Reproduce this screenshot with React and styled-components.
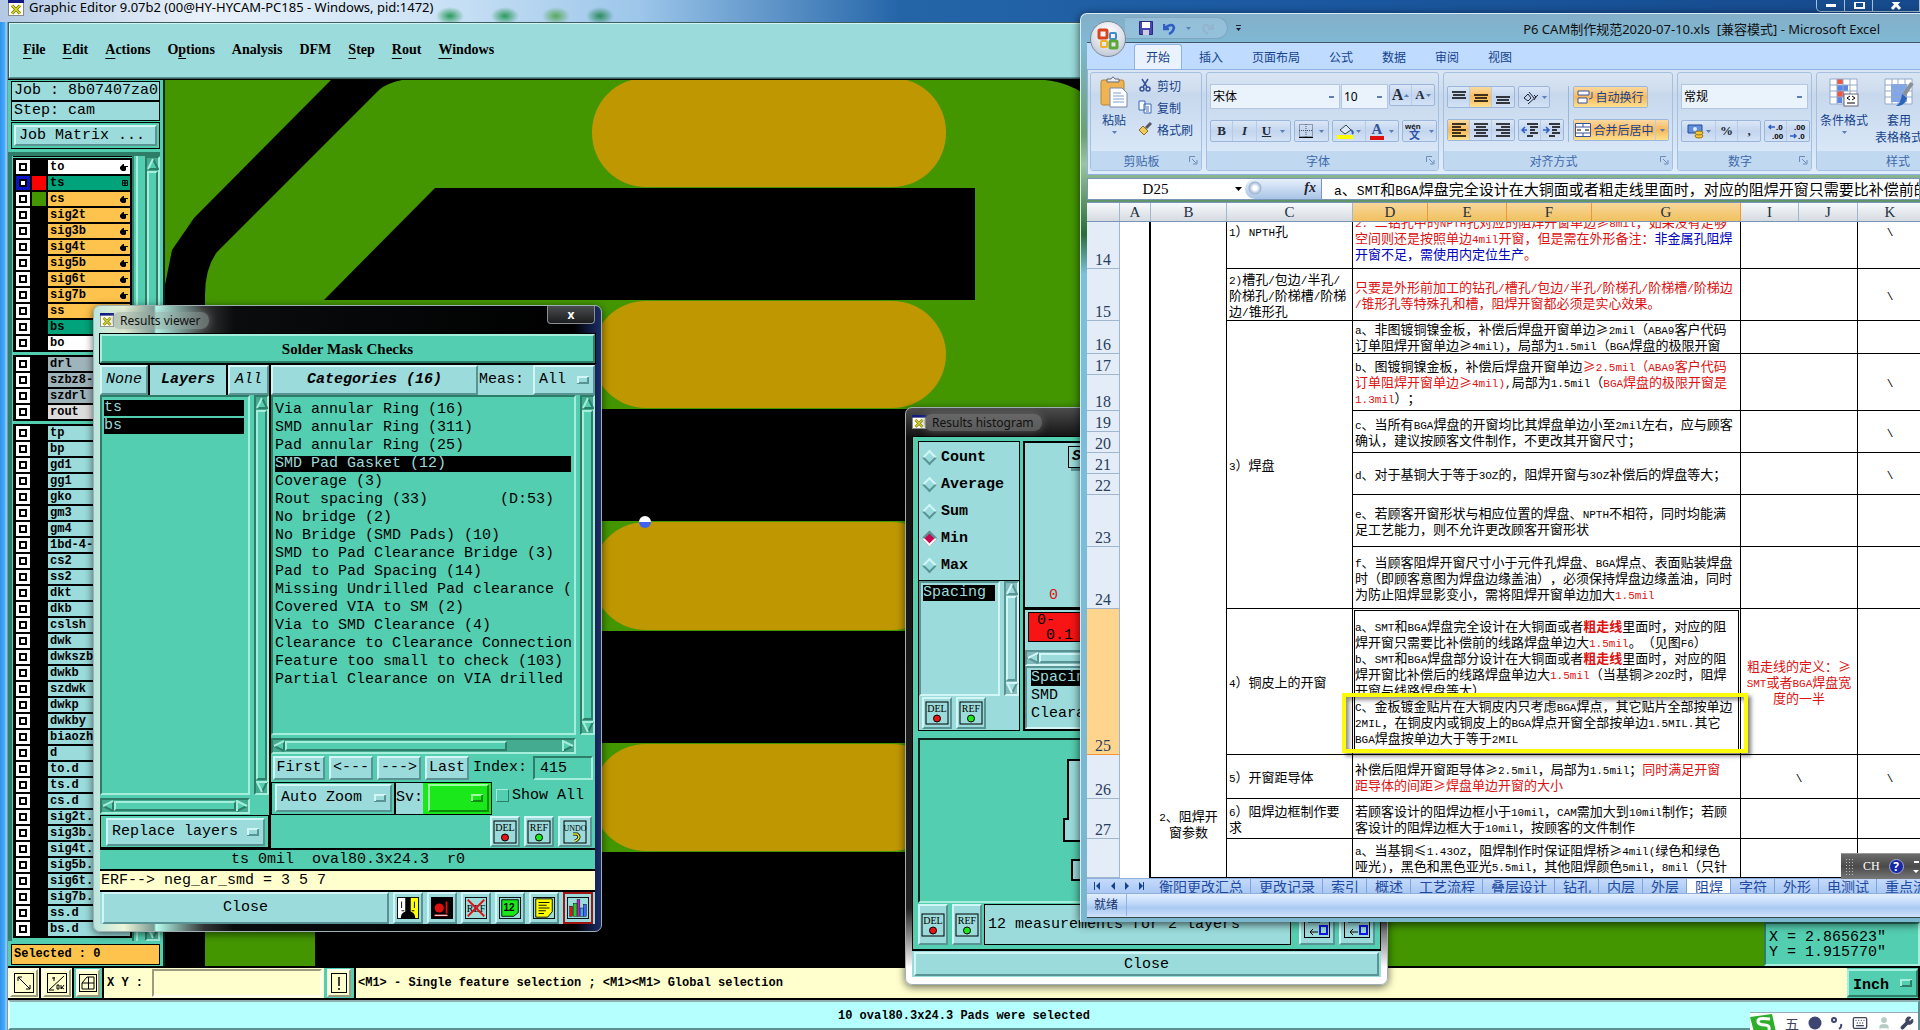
import React from 'react'
import styled, { createGlobalStyle, css } from 'styled-components'
import { Wrench, Keyboard, User } from 'lucide-react'

const AQUA = '#9bdbdb'
const MINT = '#54ceb0'
const CREAM = '#ffffce'

const mono = '"Liberation Mono", monospace'
const serif = '"Liberation Serif", serif'
const ui = '"Noto Sans", "Noto Sans CJK SC", sans-serif'
const han = '"Noto Sans CJK SC", sans-serif'

/* ---------- data ---------- */

const menus = ['_File', '_Edit', '_Actions', 'O_ptions', 'Analysis', 'DFM', '_Step', '_Rout', '_Windows']

const layerGroups = [
    [
        ['to', '#fff'], ['ts', '#00a37a', '#f00', 'grid'], ['cs', '#fdc34c', '#439600'],
        ['sig2t', '#fdc34c'], ['sig3b', '#fdc34c'], ['sig4t', '#fdc34c'], ['sig5b', '#fdc34c'],
        ['sig6t', '#fdc34c'], ['sig7b', '#fdc34c'], ['ss', '#fdc34c'], ['bs', '#00a37a'], ['bo', '#fff'],
    ],
    [['drl', '#9fb3bb'], ['szbz8-', '#9fb3bb'], ['szdrl', '#9fb3bb'], ['rout', '#dcdcdc']],
    [
        'tp', 'bp', 'gd1', 'gg1', 'gko', 'gm3', 'gm4', '1bd-4-', 'cs2', 'ss2', 'dkt', 'dkb', 'cslsh', 'dwk',
        'dwkszb', 'dwkb', 'szdwk', 'dwkp', 'dwkby', 'biaozh', 'd', 'to.d', 'ts.d', 'cs.d', 'sig2t.', 'sig3b.',
        'sig4t.', 'sig5b.', 'sig6t.', 'sig7b.', 'ss.d', 'bs.d',
    ].map(name => [name, AQUA]),
]

const categories = [
    'Via annular Ring (16)', 'SMD annular Ring (311)', 'Pad annular Ring (25)', 'SMD Pad Gasket (12)',
    'Coverage (3)', 'Rout spacing (33)        (D:53)', 'No bridge (2)', 'No Bridge (SMD Pads) (10)',
    'SMD to Pad Clearance Bridge (3)', 'Pad to Pad Spacing (14)', 'Missing Undrilled Pad clearance (',
    'Covered VIA to SM (2)', 'Via to SMD Clearance (4)', 'Clearance to Clearance Connection',
    'Feature too small to check (103)', 'Partial Clearance on VIA drilled',
]

const ribbonTabs = ['开始', '插入', '页面布局', '公式', '数据', '审阅', '视图']

const sheetTabs = [
    '衡阳更改汇总', '更改记录', '索引', '概述', '工艺流程', '叠层设计', '钻孔', '内层', '外层', '阻焊',
    '字符', '外形', '电测试', '重点流程',
]

// every line is a list of segments: plain string, or [colour, text, bold]
const R = '#d11'
const B = '#00b'
const sheetText = {
    r14: [
        [[R, '2. 二钻孔中的NPTH孔对应的阻焊开窗单边≥8mil，如果没有足够']],
        [[R, '空间则还是按照单边4mil开窗，但是需在外形备注：'], [B, '非金属孔阻焊']],
        [[B, '开窗不足，需使用内定位生产'], [R, '。']],
    ],
    r15: [
        [[R, '只要是外形前加工的钻孔/槽孔/包边/半孔/阶梯孔/阶梯槽/阶梯边']],
        [[R, '/锥形孔等特殊孔和槽，阻焊开窗都必须是实心效果。']],
    ],
    r16: [
        ['a、非图镀铜镍金板，补偿后焊盘开窗单边≥2mil（ABA9客户代码'],
        ['订单阻焊开窗单边≥4mil)，局部为1.5mil（BGA焊盘的极限开窗'],
    ],
    r17: [
        ['b、图镀铜镍金板，补偿后焊盘开窗单边', [R, '≥2.5mil（ABA9客户代码']],
        [[R, '订单阻焊开窗单边≥4mil)'], ',局部为1.5mil（', [R, 'BGA焊盘的极限开窗是']],
        [[R, '1.3mil'], '）；'],
    ],
    r19: [
        ['c、当所有BGA焊盘的开窗均比其焊盘单边小至2mil左右，应与顾客'],
        ['确认，建议按顾客文件制作，不更改其开窗尺寸；'],
    ],
    r21: [['d、对于基铜大于等于3OZ的，阻焊开窗与3OZ补偿后的焊盘等大；']],
    r23: [
        ['e、若顾客开窗形状与相应位置的焊盘、NPTH不相符，同时均能满'],
        ['足工艺能力，则不允许更改顾客开窗形状'],
    ],
    r24: [
        ['f、当顾客阻焊开窗尺寸小于元件孔焊盘、BGA焊点、表面贴装焊盘'],
        ['时（即顾客意图为焊盘边缘盖油），必须保持焊盘边缘盖油，同时'],
        ['为防止阻焊显影变小，需将阻焊开窗单边加大', [R, '1.5mil']],
    ],
    r25: [
        ['a、SMT和BGA焊盘完全设计在大铜面或者', [R, '粗走线', true], '里面时，对应的阻'],
        ['焊开窗只需要比补偿前的线路焊盘单边大', [R, '1.5mil'], '。（见图F6）'],
        ['b、SMT和BGA焊盘部分设计在大铜面或者', [R, '粗走线', true], '里面时，对应的阻'],
        ['焊开窗比补偿后的线路焊盘单边大', [R, '1.5mil'], '（当基铜≥2OZ时，阻焊'],
        ['开窗与线路焊盘等大）'],
        ['C、金板镀金贴片在大铜皮内只考虑BGA焊点，其它贴片全部按单边'],
        ['2MIL，在铜皮内或铜皮上的BGA焊点开窗全部按单边1.5MIL.其它'],
        ['BGA焊盘按单边大于等于2MIL'],
    ],
    r26: [
        ['补偿后阻焊开窗距导体≥2.5mil，局部为1.5mil；', [R, '同时满足开窗']],
        [[R, '距导体的间距≥焊盘单边开窗的大小']],
    ],
    r27: [
        ['若顾客设计的阻焊边框小于10mil，CAM需加大到10mil制作；若顾'],
        ['客设计的阻焊边框大于10mil，按顾客的文件制作'],
    ],
    r28: [
        ['a、当基铜≤1.43OZ，阻焊制作时保证阻焊桥≥4mil(绿色和绿色'],
        ['哑光)，黑色和黑色亚光5.5mil，其他阻焊颜色5mil，8mil（只针'],
    ],
    c15: [['2)槽孔/包边/半孔/'], ['阶梯孔/阶梯槽/阶梯'], ['边/锥形孔']],
    i25: [[[R, '粗走线的定义：≥']], [[R, 'SMT或者BGA焊盘宽']], [[R, '度的一半']]],
}

/* ---------- shared parts ---------- */

const Global = createGlobalStyle`
    *{
        box-sizing: border-box;
    }
    body{
        margin: 0;
        overflow: hidden;
        text-spacing-trim: space-all;
    }
    button, input, select{
        margin: 0;
        padding: 0;
        font: inherit;
        color: inherit;
        border-radius: 0;
    }
    svg{
        display: block;
        flex: none;
    }
`

const tones = {
    aqua: [AQUA, '#d2f6f6', '#5a9393'],
    mint: [MINT, '#a4eedb', '#2d7d68'],
    cream: [CREAM, '#fffff2', '#9c9c80'],
    lime: ['#1be81b', '#9dffa0', '#0e8c10'],
}

const raised = css`
    background-color: ${p => tones[p.$tone || 'aqua'][0]};
    border: 2px solid;
    border-color: ${p => {
        const [, hi, lo] = tones[p.$tone || 'aqua']
        return `${hi} ${lo} ${lo} ${hi}`
    }};
`

const sunken = css`
    background-color: ${p => tones[p.$tone || 'mint'][0]};
    border: 2px solid;
    border-color: ${p => {
        const [, hi, lo] = tones[p.$tone || 'mint']
        return `${lo} ${hi} ${hi} ${lo}`
    }};
`

const MotifButton = styled.button`
    ${raised}
    display: flex;
    align-items: center;
    justify-content: ${p => p.$start ? 'flex-start' : 'center'};
    flex: ${p => p.$grow ? 1 : 'none'};
    width: ${p => p.$w ? p.$w + 'px' : 'auto'};
    height: ${p => p.$h ? p.$h + 'px' : 'auto'};
    padding: ${p => p.$start ? '0 3px' : 0};
    font-family: ${mono};
    font-size: 15px;
    font-weight: ${p => p.$bold ? 700 : 400};
    font-style: ${p => p.$italic ? 'italic' : 'normal'};
    white-space: pre;
    border-color: ${p => p.$alert && '#a01414'};
`

const MotifSelect = styled.select`
    ${raised}
    appearance: none;
    width: ${p => p.$w ? p.$w + 'px' : 'auto'};
    flex: ${p => p.$w ? 'none' : 1};
    min-width: 0;
    height: ${p => p.$h || 28}px;
    padding: 0 4px;
    font-family: ${mono};
    font-size: 15px;
    font-weight: ${p => p.$bold ? 700 : 400};
    background-image: linear-gradient(${p => tones[p.$tone || 'aqua'][0]}, ${p => tones[p.$tone || 'aqua'][0]}),
        linear-gradient(150deg, ${p => tones[p.$tone || 'aqua'][1]} 50%, ${p => tones[p.$tone || 'aqua'][2]} 51%);
    background-repeat: no-repeat;
    background-size: 8px 4px, 12px 8px;
    background-position: right 6px center, right 4px center;
`

const ScrollTrack = styled.div`
    display: flex;
    flex: none;
    flex-direction: ${p => p.$row ? 'row' : 'column'};
    width: ${p => p.$row ? 'auto' : '15px'};
    height: ${p => p.$row ? '16px' : 'auto'};
    align-items: stretch;
    border: 2px solid;
    border-color: ${p => {
        const [, hi, lo] = tones[p.$tone || 'mint']
        return `${lo} ${hi} ${hi} ${lo}`
    }};
    background: ${p => p.$tone === 'aqua' ? '#83bcbc' : '#44ab91'};
`

const ScrollThumb = styled.div`
    ${raised}
    flex: ${p => p.$grow || 1};
    margin: 1px 0;
`

const Gap = styled.div`
    flex: ${p => p.$grow || 1};
`

const arrowPoints = {
    up: ['6,1 1,11', '1,11 11,11 6,1'],
    down: ['11,1 1,1 6,11', '6,11 11,1'],
    left: ['11,11 11,1', '11,1 1,6 11,11'],
    right: ['1,11 1,1 11,6', '11,6 1,11'],
}

const arrowFace = {
    up: '6,1 1,11 11,11',
    down: '1,1 11,1 6,11',
    left: '11,1 11,11 1,6',
    right: '1,1 1,11 11,6',
}

function Arrow({ dir, tone = 'mint' }) {
    const [face, hi, lo] = tones[tone]
    const [a, b] = arrowPoints[dir]
    return (
        <svg width="12" height="12" viewBox="0 0 12 12">
            <polygon points={arrowFace[dir]} fill={face} />
            <polyline points={b} fill="none" stroke={lo} strokeWidth="2" />
            <polyline points={a} fill="none" stroke={dir === 'left' ? lo : hi} strokeWidth="2" />
            {dir === 'left' && <polyline points="1,6 11,1" fill="none" stroke={hi} strokeWidth="2" />}
        </svg>
    )
}

function Scroll({ row, tone = 'mint', rest = 0 }) {
    return (
        <ScrollTrack $row={row} $tone={tone}>
            <Arrow dir={row ? 'left' : 'up'} tone={tone} />
            <ScrollThumb $tone={tone} $grow={8} />
            {rest > 0 && <Gap $grow={rest} />}
            <Arrow dir={row ? 'right' : 'down'} tone={tone} />
        </ScrollTrack>
    )
}

function XIcon({ size = 16 }) {
    return (
        <svg width={size} height={size} viewBox="0 0 16 16">
            <rect x="0.5" y="0.5" width="15" height="15" fill="#fffef0" stroke="#888" />
            <rect x="0" y="0" width="16" height="3" fill="#101a80" />
            <path d="M4 5.500l8 8M12 5.500l-8 8" stroke="#6f6f10" strokeWidth="3" />
            <path d="M4 5.500l8 8M12 5.500l-8 8" stroke="#d8d820" strokeWidth="1.600" />
        </svg>
    )
}

function TagIcon({ label, kind }) {
    return (
        <svg width="24" height="24" viewBox="0 0 24 24">
            <rect x="1" y="1" width="22" height="22" fill={AQUA} stroke="#000" />
            <text x="12" y="11" textAnchor="middle" fontFamily="Liberation Serif" fontSize={label.length > 3 ? 8 : 10}>{label}</text>
            {kind === 'undo'
                ? <path d="M10 14h4q4 3 0 6l-2 1" fill="none" stroke="#000" strokeWidth="3" />
                : <circle cx="12" cy="17.500" r="3.500" fill={kind === 'ref' ? '#1be81b' : '#e81414'} stroke="#000" />}
            {kind === 'undo' && <path d="M10 14h4q4 3 0 6l-2 1" fill="none" stroke="#f4ee30" strokeWidth="1.500" />}
        </svg>
    )
}

/* ---------- graphic editor ---------- */

const Desktop = styled.div`
    position: relative;
    height: 100vh;
    overflow: hidden;
    color: #000;
    background: #1e5fa8;
`

const Editor = styled.main`
    display: flex;
    flex-direction: column;
    height: 100%;
    padding-left: 8px;
    background: linear-gradient(90deg, #3391e8 0, #45b0ff 5px, #a6d9ff 6px, #5c87a8 8px, transparent 8px);
`

const EditorTitle = styled.div`
    display: flex;
    flex: none;
    align-items: flex-start;
    gap: 5px;
    height: 22px;
    margin-left: -8px;
    padding-left: 8px;
    font-family: ${ui};
    font-size: 13px;
    line-height: 15px;
    overflow: hidden;
    background:
        radial-gradient(ellipse 14px 9px at 450px 16px, #2c9a5c, transparent),
        radial-gradient(ellipse 14px 9px at 505px 16px, #2c9a5c, transparent),
        radial-gradient(ellipse 14px 9px at 556px 16px, #57a85c, transparent),
        radial-gradient(ellipse 14px 9px at 600px 16px, #2c8a5c, transparent),
        linear-gradient(90deg, #b3c9e4 0, #e8f1fa 200px, #cfe4f6 420px, #9cc6ea 640px, #2465a8 900px, #1b58a0 1300px, #164a8c 100%);
`

const Caption = styled.div`
    display: flex;
    margin: 0 0 0 auto;
    height: 12px;
    border: 1px solid #a9c3de;
    border-top: 0;
    border-radius: 0 0 0 5px;
    button{
        display: flex;
        align-items: center;
        justify-content: center;
        width: 28px;
        border: 0;
        border-right: 1px solid #a9c3de;
        background: none;
    }
    button:last-child{
        width: 46px;
        border: 0;
    }
`

const MenuBar = styled.nav`
    ${raised}
    display: flex;
    flex: none;
    align-items: center;
    gap: 17px;
    height: 57px;
    padding: 0 13px 2px;
    outline: 1px solid #3d5c5c;
    outline-offset: -1px;
    button{
        border: 0;
        background: none;
        font-family: ${serif};
        font-size: 14px;
        font-weight: 700;
    }
    u{
        text-underline-offset: 4px;
        text-decoration-thickness: 1px;
    }
`

const Work = styled.div`
    display: flex;
    flex: 1;
    min-height: 0;
    border-top: 1px solid #000;
`

const SidePanel = styled.aside`
    display: flex;
    flex: none;
    flex-direction: column;
    width: 157px;
    padding: 1px 3px;
    border-right: 2px solid #10241e;
    background: ${MINT};
    overflow: hidden;
`

const JobLine = styled.div`
    height: 20px;
    padding-left: 2px;
    border: 1px solid #000;
    background: ${AQUA};
    font: 15px/18px ${mono};
    white-space: pre;
`

const MatrixBox = styled.div`
    display: flex;
    margin: 1px 0 3px;
    padding: 2px;
    border: 1px solid #000;
    button{
        height: 21px;
    }
`

const LayerArea = styled.div`
    display: flex;
    flex: 1;
    min-height: 0;
    margin-left: -3px;
    padding-left: 1px;
    border-top: 4px solid #2d7d68;
    border-left: 4px solid #2d7d68;
`

const LayerList = styled.div`
    display: flex;
    flex-direction: column;
    gap: 3px;
    width: 120px;
    padding-top: 2px;
    border-top: 1px solid #000;
`

const LayerGroup = styled.div`
    flex: none;
    padding: 1px 2px 1px 3px;
    margin-top: ${p => p.$first ? '-1px' : 0};
    background: #000;
`

const LayerRow = styled.label`
    display: flex;
    align-items: center;
    gap: 2px;
    height: 16px;
    font: 700 12px/14px ${mono};
    input{
        appearance: none;
        width: 14px;
        height: 14px;
        border: 3px solid ${p => p.$active ? '#0a14c8' : '#fff'};
        background: #fff;
        box-shadow: inset 0 0 0 2px #000;
    }
`

const Swatch = styled.span`
    width: 14px;
    height: 14px;
    background: ${p => p.$color || '#000'};
`

const LayerName = styled.span`
    display: flex;
    flex: 1;
    align-items: center;
    justify-content: space-between;
    height: 14px;
    padding: 0 2px;
    background: ${p => p.$color};
`

const Ridge = styled.div`
    width: 13px;
    background: linear-gradient(90deg, #2d7d68 2px, ${MINT} 2px 4px, #a4eedb 4px 6px, ${MINT} 6px);
`

const SelectedBox = styled.div`
    height: 21px;
    margin: 3px 0 0;
    padding-left: 2px;
    border: 1px solid #000;
    background: #fdc34c;
    font: 700 12px/19px ${mono};
`

const Canvas = styled.div`
    position: relative;
    flex: 1;
    min-width: 0;
    background: #000;
    overflow: hidden;
`

const Coords = styled.div`
    position: absolute;
    right: 0;
    bottom: 0;
    width: 156px;
    height: 44px;
    padding: 6px 3px 0;
    border: 2px solid;
    border-color: #2d7d68 #a4eedb #a4eedb #2d7d68;
    background: ${MINT};
    font: 15px/15px ${mono};
    white-space: pre;
`

const ToolStrip = styled.div`
    display: flex;
    flex: none;
    align-items: stretch;
    height: 34px;
    border-top: 2px solid #000;
    border-bottom: 2px solid #000;
    background: ${CREAM};
    font: 700 12px/30px ${mono};
    label{
        width: 48px;
        padding-left: 3px;
        white-space: pre;
    }
    p{
        flex: 1;
        margin: 0;
        padding-left: 2px;
        white-space: pre;
        overflow: hidden;
    }
`

const XYInput = styled.input`
    ${sunken}
    width: 170px;
    margin: 1px 2px 1px 0;
    padding: 0 5px;
`

const StripCell = styled.div`
    display: flex;
    flex: none;
    align-items: center;
    justify-content: center;
    width: ${p => p.$w || 33}px;
    border-right: 2px solid #000;
    background: ${p => p.$mint ? MINT : CREAM};
`

const StatusBar = styled.footer`
    flex: none;
    height: 30px;
    border: 2px solid;
    border-color: #8fb0b0 #5d9090 #5d9090 #f0ffff;
    background: #b5ffff;
    font: 700 12px/28px ${mono};
    text-align: center;
`

function HandIcon() {
    return (
        <svg width="8" height="8" viewBox="0 0 8 8">
            <path d="M0 4l3-3h1v2h4v1H6v3L5 8H2L0 6z" />
        </svg>
    )
}

function GridIcon() {
    return (
        <svg width="6" height="6" viewBox="0 0 6 6">
            <path d="M0.500 0.500h5v5h-5zM3 0v6M0 3h6" fill="none" stroke="#000" />
        </svg>
    )
}

function Board() {
    return (
        <svg width="100%" height="100%">
            <rect width="100%" height="329" fill="#439600" />
            <path d="M166 0H237Q222 3 214 10L52 172Q40 188 40 215V885H0V205L7 170 29 138z" />
            <rect x="40" y="215" width="110" height="680" fill="#439600" />
            <polygon points="270,108 810,108 810,220 159,220" />
            <path d="M880 0h60v30Q910 2 880 0z" />
            <rect x="427" y="-2" width="354" height="109" rx="54" fill="#bf9700" />
            <rect x="427" y="221" width="354" height="107" rx="54" fill="#bf9700" />
            <rect x="150" y="441" width="660" height="110" fill="#439600" />
            <rect x="427" y="442" width="354" height="108" rx="54" fill="#bf9700" />
            <rect x="150" y="663" width="660" height="109" fill="#439600" />
            <rect x="427" y="664" width="354" height="107" rx="54" fill="#bf9700" />
            <rect x="1200" y="830" width="100%" height="100" fill="#439600" />
            <path d="M474 442a6 6 0 0 1 12 0z" fill="#fff" />
            <path d="M474 442a6 6 0 0 0 12 0z" fill="#3f63f0" />
        </svg>
    )
}

function MenuItem({ text }) {
    const at = text.indexOf('_')
    if (at < 0) return <button>{text}</button>
    return <button>{text.slice(0, at)}<u>{text[at + 1]}</u>{text.slice(at + 2)}</button>
}

function GraphicEditor() {
    return (
        <Editor>
            <EditorTitle>
                <XIcon />
                <span>Graphic Editor 9.07b2 (00@HY-HYCAM-PC185 - Windows, pid:1472)</span>
                <Caption>
                    <button aria-label="Minimize">
                        <svg width="12" height="8"><rect x="1" y="2" width="10" height="3" fill="#fff" /></svg>
                    </button>
                    <button aria-label="Restore">
                        <svg width="12" height="8"><path d="M2 0h9v6H2z" fill="none" stroke="#fff" strokeWidth="2" /></svg>
                    </button>
                    <button aria-label="Close">
                        <svg width="12" height="8"><path d="M2 -2l8 9M10 -2L2 7" stroke="#fff" strokeWidth="3" /></svg>
                    </button>
                </Caption>
            </EditorTitle>
            <MenuBar>
                {menus.map(text => <MenuItem key={text} text={text} />)}
            </MenuBar>
            <Work>
                <SidePanel>
                    <JobLine>Job : 8b07407za0</JobLine>
                    <JobLine>Step: cam</JobLine>
                    <MatrixBox><MotifButton $grow $start>Job Matrix ...</MotifButton></MatrixBox>
                    <LayerArea>
                        <LayerList>
                            {layerGroups.map((group, i) => (
                                <LayerGroup key={i} $first={i === 0}>
                                    {group.map(([name, color, swatch, icon]) => (
                                        <LayerRow key={name} $active={name === 'ts'}>
                                            <input type="checkbox" />
                                            <Swatch $color={swatch} />
                                            <LayerName $color={color}>
                                                {name}
                                                {i === 0 && (icon ? <GridIcon /> : <HandIcon />)}
                                            </LayerName>
                                        </LayerRow>
                                    ))}
                                </LayerGroup>
                            ))}
                        </LayerList>
                        <Ridge />
                        <Scroll />
                    </LayerArea>
                    <SelectedBox>Selected : 0</SelectedBox>
                </SidePanel>
                <Canvas>
                    <Board />
                    <Coords>{'X = 2.865623"\nY = 1.915770"'}</Coords>
                </Canvas>
            </Work>
            <ToolStrip>
                <StripCell>
                    <MotifButton $tone="cream" $w={28} $h={28} aria-label="Measure">
                        <svg width="20" height="20" viewBox="0 0 20 20" fill="none" stroke="#000">
                            <rect x="0.5" y="0.5" width="19" height="19" />
                            <path d="M4 4l12 12M4 8V4h4M12 16h4v-4" />
                        </svg>
                    </MotifButton>
                </StripCell>
                <StripCell>
                    <MotifButton $tone="cream" $w={28} $h={28} aria-label="Angle">
                        <svg width="20" height="20" viewBox="0 0 20 20" fill="none" stroke="#000">
                            <rect x="0.5" y="0.5" width="19" height="19" />
                            <path d="M2 17L17 3M2 17h5M5 5h3M7 4v4M10 12h2v4h-2zM14 12v4l3-4M14 14l3 2" />
                        </svg>
                    </MotifButton>
                </StripCell>
                <StripCell $w={30} $mint>
                    <MotifButton $tone="cream" $w={24} $h={28} aria-label="Grid">
                        <svg width="18" height="18" viewBox="0 0 18 18" fill="none" stroke="#000">
                            <rect x="0.5" y="0.5" width="17" height="17" />
                            <path d="M8 3h7v12H3V9zM9.500 3v12M3 9h12" />
                        </svg>
                    </MotifButton>
                </StripCell>
                <label htmlFor="xy">{'X Y :'}</label>
                <XYInput id="xy" type="text" $tone="cream" />
                <StripCell $w={32} $mint>
                    <MotifButton $tone="cream" $w={24} $h={28} aria-label="Warning">
                        <svg width="16" height="20" viewBox="0 0 16 20" fill="none" stroke="#000">
                            <rect x="0.5" y="0.5" width="15" height="19" />
                            <path d="M8 4v9M8 15v2" strokeWidth="1.500" />
                        </svg>
                    </MotifButton>
                </StripCell>
                <p>{'<M1> - Single feature selection ; <M1><M1> Global selection'}</p>
                <StripCell $w={73} $mint>
                    <MotifSelect $tone="mint" $bold aria-label="Units"><option>Inch</option></MotifSelect>
                </StripCell>
            </ToolStrip>
            <StatusBar>10 oval80.3x24.3 Pads were selected</StatusBar>
        </Editor>
    )
}

/* ---------- results viewer ---------- */

const ToolWindow = styled.section`
    position: absolute;
    left: ${p => p.$left}px;
    top: ${p => p.$top}px;
    width: ${p => p.$w}px;
    padding: 0 6px 7px;
    border: 1px solid #9fb0b4;
    border-radius: 7px;
    box-shadow: 0 2px 8px rgba(0, 0, 0, .6);
    background: ${p => p.$glass};
`

const ToolTitle = styled.header`
    display: flex;
    align-items: center;
    gap: 6px;
    height: 28px;
    font-family: ${ui};
    font-size: 12px;
    color: #111;
    span{
        padding: 0 8px;
        margin-left: -8px;
        border-radius: 8px;
        background: ${p => p.$glow};
        box-shadow: 0 0 8px ${p => p.$glow};
    }
    button{
        align-self: flex-start;
        width: 48px;
        height: 18px;
        margin-left: auto;
        border: 1px solid #8b8f92;
        border-top: 0;
        border-radius: 0 0 4px 4px;
        background: linear-gradient(#4a4d50, #1b1d1e);
        color: #fff;
        font: 700 12px/14px ${ui};
    }
`

const Stack = styled.div`
    display: flex;
    flex-direction: column;
    gap: 2px;
    background: #000;
    font: 15px/18px ${mono};
`

const Banner = styled.div`
    ${raised}
    height: 29px;
    outline: 1px solid #000;
    font: 700 15px/26px ${serif};
    text-align: center;
`

const Split = styled.div`
    display: grid;
    grid-template-columns: 169px 1fr;
    gap: 2px;
    height: 483px;
`

const Column = styled.div`
    display: flex;
    flex-direction: column;
    min-width: 0;
    background: ${MINT};
`

const HeadRow = styled.div`
    display: flex;
    align-items: stretch;
    flex: none;
    gap: ${p => p.$gap || 0}px;
    height: 30px;
    background: ${p => p.$dark ? '#000' : AQUA};
    label{
        flex: 1;
        align-self: center;
        padding-left: 1px;
    }
`

const HeadTitle = styled.div`
    flex: 1;
    background: ${AQUA};
    font-weight: 700;
    font-style: italic;
    line-height: 30px;
    text-align: center;
`

const Fill = styled.div`
    display: flex;
    flex: 1;
    min-height: 0;
    gap: 4px;
`

const ListBox = styled.ul`
    ${sunken}
    flex: 1;
    min-width: 0;
    margin: 0;
    padding: ${p => p.$pad || '2px 4px 0 2px'};
    list-style: none;
    overflow: hidden;
`

const ListItem = styled.li`
    height: 18px;
    line-height: 18px;
    overflow: hidden;
    white-space: pre;
    ${p => p.$on && css`
        background: linear-gradient(#000, #000) 0 1px / 100% 16px no-repeat;
        color: ${AQUA};
    `}
`

const ScrollSlot = styled.div`
    flex: none;
    padding: 3px 19px 1px 0;
`

const NavRow = styled.div`
    display: flex;
    flex: none;
    align-items: center;
    gap: 4px;
    height: 26px;
    padding: 0 2px;
    input{
        ${sunken}
        width: 60px;
        height: 24px;
        margin-left: auto;
        padding-left: 5px;
    }
`

const ZoomRow = styled.div`
    display: flex;
    flex: none;
    align-items: center;
    height: 34px;
`

const ZoomBox = styled.div`
    display: flex;
    flex: none;
    align-items: center;
    width: ${p => p.$w}px;
    height: 33px;
    padding: ${p => p.$pad || '0 2px 0 3px'};
    border: 1px solid #000;
    background: ${p => p.$bg || MINT};
`

const SvField = styled.span`
    display: flex;
    flex: 1;
    align-items: center;
    height: 31px;
    padding: 0 2px 0 5px;
    background: #1be81b;
`

const ShowAll = styled.label`
    display: flex;
    align-items: center;
    gap: 3px;
    margin: 0 0 5px 4px;
    input{
        appearance: none;
        width: 13px;
        height: 13px;
        border: 1px solid;
        border-color: #a4eedb #2d7d68 #2d7d68 #a4eedb;
    }
`

const IconRow = styled.div`
    display: flex;
    flex: none;
    justify-content: ${p => p.$start ? 'flex-start' : 'flex-end'};
    gap: 4px;
    padding: 1px 3px;
`

const Info = styled.div`
    height: 19px;
    padding-left: 1px;
    background: ${p => p.$bg};
    line-height: 20px;
    text-align: ${p => p.$center ? 'center' : 'left'};
    white-space: pre;
`

const BottomRow = styled.div`
    display: flex;
    gap: 4px;
    height: 32px;
    padding: 0 2px;
    background: ${AQUA};
`

const pictures = {
    faces: (
        <>
            <rect width="24" height="24" fill="#fff" /><rect x="12" width="12" height="24" fill="#ff0" />
            <path d="M9 0h6v16q5 1 5 8H4q0-7 5-8z" /><path d="M5 5v7M5 15h3M19 5v7M16 15h3" stroke="#000" />
        </>
    ),
    cam: (
        <>
            <rect width="24" height="24" fill="#000" /><circle cx="9" cy="12" r="5" fill="#e01010" />
            <path d="M17 5v13M4 20h14" stroke="#e01010" strokeWidth="2" /><path d="M4 20h14" stroke="#fff" />
        </>
    ),
    noref: (
        <>
            <text x="12" y="16" textAnchor="middle" fontFamily="Liberation Serif" fontSize="11">REF</text>
            <path d="M3 3l18 18M21 3L3 21" stroke="#e01010" strokeWidth="2" />
        </>
    ),
    page: (
        <>
            <path d="M3 3h18v14l-5 4H3z" fill="#1be81b" stroke="#000" />
            <text x="11" y="15" textAnchor="middle" fontFamily="Liberation Sans" fontWeight="700" fontSize="11">12</text>
        </>
    ),
    note: (
        <>
            <path d="M3 2h18v14l-5 6H3z" fill="#ff0" stroke="#000" />
            <path d="M6 6h12M6 9h9M6 12h12M6 15h8M6 18h6" stroke="#000" />
        </>
    ),
    bars: (
        <>
            <rect x="3" y="10" width="3" height="11" fill="#e01010" stroke="#000" strokeWidth="0.500" />
            <rect x="7" y="7" width="4" height="14" fill="#2c2" stroke="#000" strokeWidth="0.500" />
            <rect x="11" y="3" width="3" height="18" fill="#c020d0" stroke="#000" strokeWidth="0.500" />
            <rect x="15" y="12" width="3" height="9" fill="#3af" stroke="#000" strokeWidth="0.500" />
            <rect x="18" y="8" width="3" height="13" fill="#46f" stroke="#000" strokeWidth="0.500" />
        </>
    ),
}

function ResultsViewer() {
    return (
        <ToolWindow $left={93} $top={305} $w={509} $glass="linear-gradient(90deg, #b9e4dd 0, #eef6d8 30px, #7a9a92 60px, #b8fff0 62px, #333 110px, #0a0c0d 140px, #000 480px, #1a2c66 506px)">
            <ToolTitle $glow="rgba(150, 165, 160, .55)">
                <XIcon size={14} />
                <span>Results viewer</span>
                <button aria-label="Close window">x</button>
            </ToolTitle>
            <Stack>
                <Banner $tone="mint">Solder Mask Checks</Banner>
                <Split>
                    <Column>
                        <HeadRow $dark $gap={2}>
                            <MotifButton $w={48} $italic>None</MotifButton>
                            <HeadTitle>Layers</HeadTitle>
                            <MotifButton $w={41} $italic>All</MotifButton>
                        </HeadRow>
                        <Fill>
                            <ListBox>
                                <ListItem $on>ts</ListItem>
                                <ListItem $on>bs</ListItem>
                            </ListBox>
                            <Scroll />
                        </Fill>
                        <ScrollSlot><Scroll row /></ScrollSlot>
                        <ZoomBox $w={169} $pad="0 3px 0 5px">
                            <MotifSelect aria-label="Layer mode"><option>Replace layers</option></MotifSelect>
                        </ZoomBox>
                    </Column>
                    <Column>
                        <HeadRow>
                            <MotifButton $w={207} $bold $italic>Categories (16)</MotifButton>
                            <label htmlFor="meas">Meas:</label>
                            <MotifSelect id="meas" $w={62} $h={30}><option>All</option></MotifSelect>
                        </HeadRow>
                        <Fill>
                            <ListBox $pad="4px 3px 0 2px">
                                {categories.map((text, i) => <ListItem key={text} $on={i === 3}>{text}</ListItem>)}
                            </ListBox>
                            <Scroll />
                        </Fill>
                        <ScrollSlot><Scroll row rest={2} /></ScrollSlot>
                        <NavRow>
                            <MotifButton $w={52} $h={24}>First</MotifButton>
                            <MotifButton $w={44} $h={24}>{'<---'}</MotifButton>
                            <MotifButton $w={44} $h={24}>{'--->'}</MotifButton>
                            <MotifButton $w={44} $h={24}>Last</MotifButton>
                            <label htmlFor="index">Index:</label>
                            <input id="index" type="text" defaultValue="415" />
                        </NavRow>
                        <ZoomRow>
                            <ZoomBox $w={124}>
                                <MotifSelect aria-label="Zoom mode"><option>Auto Zoom</option></MotifSelect>
                            </ZoomBox>
                            <ZoomBox $w={97} $pad="0" $bg={AQUA}>
                                <label htmlFor="sv">Sv:</label>
                                <SvField>
                                    <MotifSelect id="sv" $tone="lime"><option> </option></MotifSelect>
                                </SvField>
                            </ZoomBox>
                            <ShowAll><input type="checkbox" />Show All</ShowAll>
                        </ZoomRow>
                        <IconRow>
                            <MotifButton $w={30} $h={31} aria-label="Delete"><TagIcon label="DEL" kind="del" /></MotifButton>
                            <MotifButton $w={30} $h={31} aria-label="Reference"><TagIcon label="REF" kind="ref" /></MotifButton>
                            <MotifButton $w={34} $h={31} aria-label="Undo"><TagIcon label="UNDO" kind="undo" /></MotifButton>
                        </IconRow>
                    </Column>
                </Split>
                <Info $bg={MINT} $center>{'ts 0mil  oval80.3x24.3  r0'}</Info>
                <Info $bg={CREAM}>{'ERF--> neg_ar_smd = 3 5 7'}</Info>
                <BottomRow>
                    <MotifButton $grow>Close</MotifButton>
                    {Object.keys(pictures).map(name => (
                        <MotifButton key={name} $w={30} $alert={name === 'bars'} aria-label={name}>
                            <svg width="22" height="22" viewBox="0 0 24 24">
                                {pictures[name]}
                                <rect x="0.5" y="0.5" width="23" height="23" fill="none" stroke="#000" />
                            </svg>
                        </MotifButton>
                    ))}
                </BottomRow>
            </Stack>
        </ToolWindow>
    )
}

/* ---------- results histogram ---------- */

const HistoBody = styled.div`
    padding: 4px 5px 1px;
    border: 1px solid #000;
    background: ${MINT};
    font: 15px/18px ${mono};
`

const HistoTop = styled.div`
    display: grid;
    grid-template-columns: 102px 1fr;
    gap: 3px;
    height: 290px;
`

const HistoSide = styled.div`
    display: flex;
    flex-direction: column;
    border: 1px solid #000;
    background: ${AQUA};
`

const RadioList = styled.fieldset`
    margin: 0;
    padding: 2px 3px;
    height: 139px;
    border: 0;
    border-bottom: 1px solid #000;
    label{
        display: flex;
        align-items: center;
        gap: 6px;
        height: 27px;
        font-weight: 700;
    }
    input{
        appearance: none;
        width: 11px;
        height: 11px;
        margin: 0 0 0 2px;
        border: 2px solid;
        border-color: #d2f6f6 #5a9393 #5a9393 #d2f6f6;
        transform: rotate(45deg);
    }
    input:checked{
        border-color: #5a9393 #fff #fff #5a9393;
        background: #c8064f;
    }
`

const HistoPlot = styled.div`
    display: flex;
    flex-direction: column;
    border: 2px solid #000;
    background: ${AQUA};
    min-width: 0;
`

const PlotArea = styled.div`
    display: flex;
    flex: none;
    flex-direction: column;
    align-items: flex-start;
    justify-content: space-between;
    height: 167px;
    padding: 3px 0 2px 24px;
    border-bottom: 3px solid #000;
    color: #d11;
    h4{
        margin: 0 0 0 19px;
        padding: 0 3px;
        border: 1px solid #000;
        box-shadow: 3px 3px 0 #5a9393;
        background: ${AQUA};
        color: #000;
        font: italic 700 15px/20px ${mono};
    }
`

const BinLabel = styled.div`
    flex: none;
    width: 88px;
    height: 30px;
    margin: 2px 0 8px 3px;
    padding-left: 8px;
    border: 1px solid #000;
    background: #f81414;
    line-height: 15px;
    white-space: pre;
`

const ShapePanel = styled.div`
    height: 165px;
    margin: 7px 0 1px;
    border: 2px solid;
    border-color: #10241e #a4eedb #a4eedb #10241e;
`

const MeasureRow = styled.div`
    display: flex;
    align-items: stretch;
    gap: 4px;
    height: 41px;
    margin-bottom: 3px;
    p{
        flex: 1;
        margin: 0 4px 0 -2px;
        padding-left: 3px;
        border: 1px solid #000;
        background: ${AQUA};
        line-height: 39px;
    }
`

const CloseRow = styled.div`
    display: flex;
    height: 27px;
    padding: 1px 2px;
    border-top: 1px solid #000;
    background: ${AQUA};
`

function CopyIcon() {
    return (
        <svg width="26" height="26" viewBox="0 0 26 26" fill="none">
            <rect x="0.5" y="0.5" width="25" height="25" stroke="#000" />
            <path d="M4 10h12M6 20h8M6 20l3-3M6 20l3 3" stroke="#000" />
            <rect x="16" y="14" width="7" height="8" stroke="#1414e0" strokeWidth="2" />
        </svg>
    )
}

function ResultsHistogram() {
    return (
        <ToolWindow $left={905} $top={407} $w={483} $glass="linear-gradient(#4c4c4c 0, #111 30px, #222 500px, #fff 560px)">
            <ToolTitle $glow="rgba(130, 130, 130, .6)">
                <XIcon size={14} />
                <span>Results histogram</span>
            </ToolTitle>
            <HistoBody>
                <HistoTop>
                    <HistoSide>
                        <RadioList>
                            {['Count', 'Average', 'Sum', 'Min', 'Max'].map(name => (
                                <label key={name}>
                                    <input type="radio" name="stat" defaultChecked={name === 'Min'} />{name}
                                </label>
                            ))}
                        </RadioList>
                        <Fill>
                            <ListBox $tone="aqua" $pad="1px 3px 0 2px"><ListItem $on>Spacing</ListItem></ListBox>
                            <Scroll tone="aqua" />
                        </Fill>
                        <IconRow $start>
                            <MotifButton $w={30} $h={32} aria-label="Delete"><TagIcon label="DEL" kind="del" /></MotifButton>
                            <MotifButton $w={30} $h={32} aria-label="Reference"><TagIcon label="REF" kind="ref" /></MotifButton>
                        </IconRow>
                    </HistoSide>
                    <HistoPlot>
                        <PlotArea><h4>Spacing</h4><span>0</span></PlotArea>
                        <BinLabel>{'0-\n 0.1'}</BinLabel>
                        <Scroll row tone="aqua" />
                        <ListBox $tone="aqua" $pad="1px 4px">
                            <ListItem $on>Spacing</ListItem>
                            <ListItem>SMD</ListItem>
                            <ListItem>Clearance</ListItem>
                        </ListBox>
                    </HistoPlot>
                </HistoTop>
                <ShapePanel>
                    <svg width="100%" height="100%">
                        <path d="M280 20H148v59h-4v22h136zM280 120H152v20h128z" fill={AQUA} stroke="#000" strokeWidth="2" />
                    </svg>
                </ShapePanel>
                <MeasureRow>
                    <MotifButton $w={30} aria-label="Delete"><TagIcon label="DEL" kind="del" /></MotifButton>
                    <MotifButton $w={30} aria-label="Reference"><TagIcon label="REF" kind="ref" /></MotifButton>
                    <p>12 measurements for 2 layers</p>
                    <MotifButton $w={36} aria-label="Copy"><CopyIcon /></MotifButton>
                    <MotifButton $w={36} aria-label="Move"><CopyIcon /></MotifButton>
                </MeasureRow>
            </HistoBody>
            <CloseRow><MotifButton $grow>Close</MotifButton></CloseRow>
        </ToolWindow>
    )
}

/* ---------- spreadsheet ---------- */

const Excel = styled.section`
    position: absolute;
    left: 1080px;
    right: 0;
    top: 13px;
    padding: 0 0 4px 6px;
    border-top: 1px solid #d7ecf8;
    border-left: 1px solid #d7ecf8;
    border-radius: 7px 0 0 0;
    box-shadow: 0 2px 10px rgba(0, 0, 0, .7);
    background: linear-gradient(#84aec8 0, #7fb9d4 28px, #6da06c 120px, #9cc4a0 150px, #2b6b38 220px, #7cc0dc 260px, #7ab6ce 100%);
    overflow: hidden;
    color: #15428b;
    font-family: ${ui};
    font-size: 12px;
`

const OfficeButton = styled.button`
    position: absolute;
    left: 9px;
    top: 7px;
    width: 36px;
    height: 36px;
    border: 1px solid #7a8796;
    border-radius: 50%;
    background: radial-gradient(circle at 50% 30%, #fff 0, #e3e6ee 45%, #b3bccb 100%);
    display: flex;
    align-items: center;
    justify-content: center;
`

const ExcelTitle = styled.header`
    display: flex;
    align-items: center;
    gap: 8px;
    height: 28px;
    padding-left: 38px;
    color: #111;
    h1{
        margin: 0 40px 0 auto;
        font-size: 13px;
        font-weight: 400;
        white-space: pre;
    }
`

const Quick = styled.div`
    display: flex;
    align-items: center;
    gap: 10px;
    width: 103px;
    height: 22px;
    padding-left: 14px;
    border: 1px solid #7fa5bf;
    border-left: 0;
    border-radius: 0 11px 11px 0;
    background: rgba(160, 200, 225, .6);
`

const TabBar = styled.nav`
    display: flex;
    gap: 3px;
    height: 27px;
    padding: 1px 0 0 47px;
    border-top: 1px solid #456;
    background: #bfdbff;
`

const RibbonTab = styled.button`
    padding: 0 11px 1px;
    margin-right: 2px;
    border: 1px solid ${p => p.$on ? '#8db2e3' : 'transparent'};
    border-bottom: 0;
    border-radius: 3px 3px 0 0;
    background: ${p => p.$on ? '#eaf3fd' : 'none'};
    font-family: ${han};
`

const Ribbon = styled.div`
    display: flex;
    gap: 4px;
    height: 106px;
    padding: 2px 0 3px 2px;
    border: 1px solid #8db2e3;
    border-right: 0;
    background: linear-gradient(#dbe6f4 0, #cfddee 20px, #c7d8ed 24px, #e0edfb 100%);
`

const GroupBox = styled.div`
    display: flex;
    flex: none;
    flex-direction: column;
    width: ${p => p.$w}px;
    border: 1px solid #a5bfe0;
    border-radius: 3px;
    font-family: ${han};
    overflow: hidden;
    h2{
        display: flex;
        flex: none;
        align-items: center;
        height: 19px;
        margin: 0;
        padding: 0 3px;
        background: #c1d8f1;
        color: #3e6aaa;
        font-size: 12px;
        font-weight: 400;
        line-height: 19px;
    }
    h2 span{
        flex: 1;
        text-align: center;
    }
`

const GroupBody = styled.div`
    display: flex;
    flex: 1;
    min-height: 0;
    flex-direction: ${p => p.$row ? 'row' : 'column'};
    gap: ${p => p.$gap || 11}px;
    padding: ${p => p.$pad || '11px 3px 0'};
`

const ToolLine = styled.div`
    display: flex;
    align-items: flex-start;
    gap: ${p => p.$gap || 3}px;
`

const Cluster = styled.div`
    display: flex;
    height: 22px;
    margin-left: ${p => p.$push ? 'auto' : 0};
    border: 1px solid #9ab6db;
    border-radius: 2px;
    background: linear-gradient(#dbe7f6, #c3d5ee 50%, #d3e2f5);
`

const Tool = styled.button`
    && {
        display: flex;
        align-items: center;
        justify-content: center;
        gap: ${p => p.$gap || 2}px;
        width: ${p => p.$w || 22}px;
        height: 20px;
        border: 0;
        border-right: ${p => p.$last ? 0 : '1px solid #b5cbe8'};
        background: ${p => p.$on ? 'linear-gradient(#fbd9a0, #f9b85c 50%, #fde08c)' : 'none'};
        color: ${p => p.$plain ? '#15428b' : '#222a38'};
        font: ${p => p.$italic ? 'italic' : 'normal'} ${p => p.$plain ? 400 : 700} ${p => p.$size || 13}px/18px ${p => p.$plain ? han : serif};
    }
`

const FontColor = styled.span`
    padding: 0 2px;
    border-bottom: 4px solid #e01010;
    color: #35539a;
    line-height: 13px;
`

const Combo = styled.select`
    appearance: none;
    width: ${p => p.$w}px;
    height: 25px;
    padding: 0 2px;
    border: 1px solid #b3c7e1;
    background: #eaf2fb linear-gradient(#5a7fb5, #5a7fb5) right 5px center / 5px 2px no-repeat;
    color: #000;
    font: 12px ${ui};
`

const FormulaBar = styled.div`
    display: flex;
    align-items: stretch;
    height: 22px;
    margin: 3px 0 2px;
    border: 1px solid #7996b8;
    background: #fff;
    color: #000;
`

const NameBox = styled.div`
    display: flex;
    flex: none;
    align-items: center;
    width: 157px;
    padding-right: 3px;
    span{
        flex: 1;
        padding-right: 12px;
        text-align: center;
        font: 15px ${serif};
    }
`

const FxBox = styled.div`
    flex: none;
    width: 77px;
    padding-right: 5px;
    border-right: 1px solid #7996b8;
    border-radius: 10px 0 0 10px;
    background: radial-gradient(circle at 10px 9px, #fff 2px, #9db4d3 6px, transparent 7px), linear-gradient(#e7f0fb, #a9c4e6);
    color: #223;
    font: italic 700 14px/18px ${serif};
    text-align: right;
`

const FormulaText = styled.div`
    flex: 1;
    padding-left: 12px;
    overflow: hidden;
    font: 15px/20px ${han};
    white-space: nowrap;
    i{
        font: 13px/20px ${mono};
    }
`

const ColHeads = styled.div`
    display: flex;
    height: 20px;
    border-top: 1px solid #7996b8;
    border-bottom: 1px solid #7996b8;
    overflow: hidden;
`

const ColHead = styled.div`
    flex: none;
    width: ${p => p.$w}px;
    border-right: 1px solid ${p => p.$on ? '#f29536' : '#9eb6ce'};
    background: ${p => p.$on ? 'linear-gradient(#f8d79b, #f1c15f)' : 'linear-gradient(#f6fafb, #d5dae2)'};
    color: #1f2f3f;
    font: 15px/18px ${serif};
    text-align: center;
`

const SheetView = styled.div`
    position: relative;
    background: #fff;
    overflow: hidden;
`

// the sheet is scrolled a little way into row 14
const Sheet = styled.table`
    width: 836px;
    margin-top: -29px;
    table-layout: fixed;
    border-collapse: separate;
    border-spacing: 0;
    color: #000;
    font: 13px/16px ${han};
    white-space: nowrap;
    i{
        font: 11px/1 ${mono};
    }
`

const RowHead = styled.th`
    height: ${p => p.$h}px;
    padding: 0;
    border-right: 1px solid #9eb6ce;
    border-bottom: 1px solid ${p => p.$on ? '#f29536' : '#9eb6ce'};
    background: ${p => p.$on ? '#ffd58d' : '#e4ecf7'};
    color: #27405e;
    vertical-align: bottom;
    font: 16px/16px ${serif};
`

const Cell = styled.td`
    padding: ${p => p.$pad || '0 2px'};
    border-right: 1px solid #000;
    border-bottom: 1px solid #000;
    vertical-align: ${p => p.$v || 'middle'};
    text-align: ${p => p.$center ? 'center' : 'left'};
    overflow: hidden;
    ${p => p.$blank && css`
        border-right: 2px solid #000;
        border-bottom: 0;
    `}
    ${p => p.$current && css`
        box-shadow: inset 0 0 0 1px #fff, inset 0 0 0 2px #000;
    `}
`

const Highlight = styled.div`
    position: absolute;
    left: 255px;
    top: 471px;
    width: 406px;
    height: 60px;
    border: 4px solid #fdfb0c;
    box-shadow: 3px 3px 4px rgba(0, 0, 0, .5), inset 3px 3px 4px rgba(0, 0, 0, .45);
`

const Seg = styled.span`
    color: ${p => p.$color};
    font-weight: ${p => p.$bold ? 700 : 400};
`

const SheetTabs = styled.nav`
    display: flex;
    align-items: center;
    height: 16px;
    border-top: 1px solid #8fb0dc;
    border-bottom: 1px solid #8fb0dc;
    background: linear-gradient(#c4dafa, #a9c8f3);
    overflow: hidden;
    svg{
        margin: 0 6px;
    }
`

const SheetTab = styled.button`
    flex: none;
    height: 16px;
    padding: 0 7px 0 8px;
    border: 0;
    border-right: 1px solid #7fa3d4;
    background: ${p => p.$on ? '#fff' : 'none'};
    color: #1e4ba0;
    font: 14px/15px ${han};
`

const ExcelStatus = styled.footer`
    height: 24px;
    border-bottom: 1px solid #344;
    background: linear-gradient(#e3effe, #c1d9f9 40%, #a9c9f2 60%, #d0e2fa);
    color: #15326b;
    line-height: 22px;
    span{
        display: inline-block;
        padding: 0 8px 0 7px;
        border-right: 1px solid #8db2e3;
    }
`

// latin runs sit half as wide as the ideographs around them
function Mixed({ text }) {
    return text.split(/([\x20-\x7e]+)/).map((part, i) => i % 2 ? <i key={i}>{part}</i> : part)
}

function Rich({ lines }) {
    return lines.map((line, i) => (
        <div key={i}>
            {line.map((seg, j) => typeof seg === 'string'
                ? <Mixed key={j} text={seg} />
                : <Seg key={j} $color={seg[0]} $bold={seg[2]}><Mixed text={seg[1]} /></Seg>)}
        </div>
    ))
}

function Tri({ color = '#5a7fb5', up }) {
    return <svg width="5" height="3" viewBox="0 0 5 3"><path d={up ? 'M0 3h5L2.500 0z' : 'M0 0h5L2.500 3z'} fill={color} /></svg>
}

function Launcher() {
    return (
        <svg width="9" height="9" viewBox="0 0 9 9" fill="none" stroke="#6c8cb8">
            <path d="M0.500 6V0.500H6M3 3l4 4M8 4v4H4" />
        </svg>
    )
}

function Group({ title, w, children, plain }) {
    return (
        <GroupBox $w={w}>
            {children}
            <h2><span>{title}</span>{!plain && <Launcher />}</h2>
        </GroupBox>
    )
}

function Lines({ rows, top = 2 }) {
    return (
        <svg width="16" height="16" viewBox="0 0 16 16" stroke="#000" strokeWidth="1.500">
            {rows.map(([x, w], i) => <path key={i} d={`M${x} ${top + i * 3}h${w}`} />)}
        </svg>
    )
}

function IndentIcon({ flip }) {
    return (
        <svg width="18" height="16" viewBox="0 0 18 16" fill="none" stroke="#000" strokeWidth="1.500">
            <path d="M6 2h11M9 5h8M9 8h5M9 11h8M6 14h6" />
            <path d={flip ? 'M0 8h5M3 5l3 3-3 3' : 'M6 8H1M4 5L1 8l3 3'} stroke="#2f5fc4" />
        </svg>
    )
}

// decimals gained or lost: an arrow beside one row of digits
function DecimalIcon({ less }) {
    return (
        <svg width="18" height="18" viewBox="0 0 18 18" fontFamily="Liberation Sans" fontWeight="700" fontSize="8">
            <text x={less ? 5 : 9} y="8">{less ? '.00' : '.0'}</text>
            <text x={less ? 9 : 5} y="17">{less ? '.0' : '.00'}</text>
            <path d={less ? 'M1 14h6M5 12l2 2-2 2' : 'M8 5H2M4 3L2 5l2 2'} fill="none" stroke="#2f5fc4" strokeWidth="1.500" />
        </svg>
    )
}

const full = [1, 14]
const leftRows = [full, [1, 9], full, [1, 9], full]
const midRows = [full, [3, 10], full, [3, 10], full]
const rightRows = [full, [6, 9], full, [6, 9], full]

const Clip = styled.div`
    display: flex;
    flex-direction: column;
    gap: ${p => p.$gap || 0}px;
    button{
        display: flex;
        align-items: center;
        gap: 5px;
        height: 18px;
        border: 0;
        background: none;
        color: #15428b;
        white-space: nowrap;
    }
`

const BigButton = styled.button`
    display: flex;
    flex: none;
    flex-direction: column;
    align-items: center;
    gap: 3px;
    width: ${p => p.$w}px;
    height: 76px;
    border: 0;
    background: none;
    color: #15428b;
    line-height: 17px;
    white-space: nowrap;
`

const Divider = styled.span`
    width: 1px;
    height: 56px;
    margin: 0 1px;
    background: #9ab6db;
`

function CondIcon({ brush }) {
    return (
        <svg width="30" height="30" viewBox="0 0 30 30">
            <rect x="1" y="1" width="27" height="25" fill="#fff" />
            {brush
                ? <rect x="7" y="6" width="16" height="18" fill="#7ea6ee" />
                : <><rect x="8" y="1" width="6" height="5" fill="#f25540" /><rect x="8" y="7" width="11" height="6" fill="#5b86e5" /><rect x="8" y="13" width="7" height="6" fill="#f25540" /><rect x="8" y="19" width="5" height="6" fill="#5b86e5" /></>}
            <path d="M1 1h27v25H1zM8 1v25M14 1v25M21 1v25M1 7h27M1 13h27M1 19h27" fill="none" stroke="#93a8c8" />
            {brush
                ? <><path d="M28 5L20 17" stroke="#8a8f98" strokeWidth="4" /><path d="M18 16l5 4q-3 9-11 8 5-3 6-12z" fill="#2d63b8" /></>
                : <><rect x="15" y="16" width="14" height="12" fill="#fff" stroke="#667" /><path d="M21 18l-3 2 3 2M23 22l3-2-3-2M18 25h8" fill="none" stroke="#000" /></>}
        </svg>
    )
}

function RibbonGroups() {
    return (
        <Ribbon>
            <Group title="剪贴板" w={112}>
                <GroupBody $row $gap={8} $pad="3px 2px 0 7px">
                    <BigButton $w={32}>
                        <svg width="30" height="32" viewBox="0 0 30 32">
                            <rect x="2" y="4" width="23" height="25" rx="2" fill="#eeb454" stroke="#b98532" />
                            <path d="M8 6V3h4q2-4 4 0h4v3z" fill="#e9edf4" stroke="#667" />
                            <path d="M11 12h12l5 5v14H11z" fill="#fff" stroke="#7488a8" />
                            <path d="M14 17h8M14 20h11M14 23h11M14 26h11" stroke="#7ea0d4" />
                        </svg>
                        粘贴
                        <Tri />
                    </BigButton>
                    <Clip $gap={4}>
                        <button>
                            <svg width="14" height="14" viewBox="0 0 14 14" fill="none" stroke="#35539a" strokeWidth="1.500">
                                <path d="M4 1l5 8M10 1L5 9" /><circle cx="4" cy="11" r="2" /><circle cx="10" cy="11" r="2" />
                            </svg>
                            剪切
                        </button>
                        <button>
                            <svg width="14" height="14" viewBox="0 0 14 14" fill="#fff" stroke="#3868b8">
                                <path d="M1 1h6v9H1zM6 4h7v9H6z" /><path d="M8 7h3M8 9h3M8 11h3" />
                            </svg>
                            复制
                        </button>
                        <button>
                            <svg width="14" height="14" viewBox="0 0 14 14">
                                <path d="M13 1L8 6" stroke="#556" strokeWidth="3" /><path d="M5 4l5 5-4 4-5-5z" fill="#eccb58" stroke="#8a7020" />
                            </svg>
                            格式刷
                        </button>
                    </Clip>
                </GroupBody>
            </Group>
            <Group title="字体" w={233}>
                <GroupBody>
                    <ToolLine $gap={1}>
                        <Combo $w={130} aria-label="Font"><option>宋体</option></Combo>
                        <Combo $w={47} aria-label="Size"><option>10</option></Combo>
                        <Cluster $push>
                            <Tool $gap={1} $size={16}>A<Tri up /></Tool>
                            <Tool $gap={1} $last>A<Tri /></Tool>
                        </Cluster>
                    </ToolLine>
                    <ToolLine>
                        <Cluster>
                            <Tool $w={22}>B</Tool>
                            <Tool $w={24} $italic>I</Tool>
                            <Tool $w={33} $gap={9} $last><u>U</u><Tri /></Tool>
                        </Cluster>
                        <Cluster>
                            <Tool $w={33} $gap={6} $last aria-label="Borders">
                                <svg width="14" height="14" viewBox="0 0 14 14" fill="none" stroke="#456" strokeDasharray="1 1">
                                    <path d="M0.500 0.500h13v12h-13zM7 0v13M0 6.500h14" /><path d="M0 13.500h14" strokeDasharray="none" stroke="#000" />
                                </svg>
                                <Tri />
                            </Tool>
                        </Cluster>
                        <Cluster>
                            <Tool $w={33} aria-label="Fill colour">
                                <svg width="17" height="16" viewBox="0 0 17 16">
                                    <path d="M3 7l6-5 5 5-6 4z" fill="#dfe9f6" stroke="#345" /><path d="M14 7q3 2 1 4" fill="none" stroke="#2d63b8" strokeWidth="2" />
                                    <rect y="12" width="16" height="4" fill="#ff0" />
                                </svg>
                                <Tri />
                            </Tool>
                            <Tool $w={32} $gap={5} $size={15} $last><FontColor>A</FontColor><Tri /></Tool>
                        </Cluster>
                        <Cluster $push>
                            <Tool $w={33} $gap={6} $last $plain aria-label="Phonetic guide">
                                <svg width="18" height="18" viewBox="0 0 18 18" fill="#3355a8" fontWeight="700">
                                    <text x="0" y="7" fontFamily="Liberation Sans" fontSize="8" fill="#111">wén</text>
                                    <text x="4" y="17" fontFamily="Noto Sans CJK SC" fontSize="11">文</text>
                                </svg>
                                <Tri />
                            </Tool>
                        </Cluster>
                    </ToolLine>
                </GroupBody>
            </Group>
            <Group title="对齐方式" w={230}>
                <GroupBody $row $gap={3} $pad="13px 3px 0">
                    <Clip $gap={11}>
                        <Cluster>
                            <Tool aria-label="Top"><Lines rows={[full, [2, 12], full]} top={3} /></Tool>
                            <Tool aria-label="Middle" $on><Lines rows={[full, [2, 12], full]} top={6} /></Tool>
                            <Tool aria-label="Bottom" $last><Lines rows={[full, [2, 12], full]} top={8} /></Tool>
                        </Cluster>
                        <Cluster>
                            <Tool aria-label="Left" $on><Lines rows={leftRows} /></Tool>
                            <Tool aria-label="Center"><Lines rows={midRows} /></Tool>
                            <Tool aria-label="Right" $last><Lines rows={rightRows} /></Tool>
                        </Cluster>
                    </Clip>
                    <Clip $gap={11}>
                        <ToolLine>
                            <Cluster>
                                <Tool $w={30} $last aria-label="Orientation">
                                    <svg width="18" height="16" viewBox="0 0 18 16" fill="none" stroke="#223">
                                        <path d="M2 9l4-4 3 4-3 3zM7 3l5 6M12 6l2 2-2 3M6 15L16 6" />
                                    </svg>
                                    <Tri />
                                </Tool>
                            </Cluster>
                        </ToolLine>
                        <Cluster>
                            <Tool aria-label="Outdent"><IndentIcon /></Tool>
                            <Tool aria-label="Indent" $last><IndentIcon flip /></Tool>
                        </Cluster>
                    </Clip>
                    <Divider />
                    <Clip $gap={11}>
                        <ToolLine>
                            <Cluster>
                                <Tool $w={73} $on $plain $size={12} $last>
                                    <svg width="16" height="16" viewBox="0 0 16 16" fill="#fff" stroke="#35539a">
                                        <path d="M1 2h11v4H1zM1 9h9v5H1z" /><path d="M15 3v6l-3 1" fill="none" />
                                    </svg>
                                    自动换行
                                </Tool>
                            </Cluster>
                        </ToolLine>
                        <Cluster>
                            <Tool $w={82} $on $plain $size={12}>
                                <svg width="16" height="16" viewBox="0 0 16 16" fill="#fff" stroke="#35539a">
                                    <path d="M0.500 1.500h15v13h-15zM0 5h16M0 11h16M8 1v4M8 11v4" /><path d="M2 8h4M10 8h4" stroke="#000" />
                                </svg>
                                合并后居中
                            </Tool>
                            <Tool $w={12} $on $last aria-label="Merge options"><Tri /></Tool>
                        </Cluster>
                    </Clip>
                </GroupBody>
            </Group>
            <Group title="数字" w={135}>
                <GroupBody>
                    <Combo $w={127} aria-label="Number format"><option>常规</option></Combo>
                    <ToolLine>
                        <Cluster>
                            <Tool $w={34} aria-label="Currency">
                                <svg width="17" height="16" viewBox="0 0 17 16">
                                    <path d="M1 2h14v8H1z" fill="#5f8fdc" stroke="#254c94" /><circle cx="8" cy="6" r="2" fill="#dce9fb" />
                                    <ellipse cx="12" cy="13" rx="4" ry="2" fill="#f4c63c" stroke="#9a7410" /><ellipse cx="12" cy="10" rx="4" ry="2" fill="#f4c63c" stroke="#9a7410" />
                                </svg>
                                <Tri />
                            </Tool>
                            <Tool $w={22}>%</Tool>
                            <Tool $w={22} $last>,</Tool>
                        </Cluster>
                        <Cluster $push>
                            <Tool aria-label="Increase decimal"><DecimalIcon /></Tool>
                            <Tool $last aria-label="Decrease decimal"><DecimalIcon less /></Tool>
                        </Cluster>
                    </ToolLine>
                </GroupBody>
            </Group>
            <Group title="样式" w={164} plain>
                <GroupBody $row $gap={3} $pad="5px 2px 0">
                    <BigButton $w={50}><CondIcon />条件格式<Tri /></BigButton>
                    <BigButton $w={54}><CondIcon brush /><span>套用<br />表格格式</span></BigButton>
                </GroupBody>
            </Group>
        </Ribbon>
    )
}

const slash = <Cell $center><i>\</i></Cell>

function SheetTable() {
    return (
        <Sheet>
            <colgroup>
                {[33, 31, 76, 126, 388, 117, 65].map((w, i) => <col key={i} width={w} />)}
            </colgroup>
            <tbody>
                <tr>
                    <RowHead $h={76}>14</RowHead>
                    <Cell $blank rowSpan={15} />
                    <Cell rowSpan={15} $center $v="bottom" $pad="0 0 37px">
                        <Rich lines={[['2、阻焊开'], ['窗参数']]} />
                    </Cell>
                    <Cell><Mixed text="1）NPTH孔" /></Cell>
                    <Cell $v="bottom" $pad="0 2px 6px"><Rich lines={sheetText.r14} /></Cell>
                    <Cell />{slash}
                </tr>
                <tr>
                    <RowHead $h={52}>15</RowHead>
                    <Cell><Rich lines={sheetText.c15} /></Cell>
                    <Cell><Rich lines={sheetText.r15} /></Cell>
                    <Cell />{slash}
                </tr>
                <tr>
                    <RowHead $h={33}>16</RowHead>
                    <Cell rowSpan={9}><Mixed text="3）焊盘" /></Cell>
                    <Cell><Rich lines={sheetText.r16} /></Cell>
                    <Cell /><Cell />
                </tr>
                <tr>
                    <RowHead $h={21}>17</RowHead>
                    <Cell rowSpan={2}><Rich lines={sheetText.r17} /></Cell>
                    <Cell rowSpan={2} />
                    <Cell rowSpan={2} $center><i>\</i></Cell>
                </tr>
                <tr><RowHead $h={36}>18</RowHead></tr>
                <tr>
                    <RowHead $h={21}>19</RowHead>
                    <Cell rowSpan={2}><Rich lines={sheetText.r19} /></Cell>
                    <Cell rowSpan={2} />
                    <Cell rowSpan={2} $center><i>\</i></Cell>
                </tr>
                <tr><RowHead $h={21}>20</RowHead></tr>
                <tr>
                    <RowHead $h={21}>21</RowHead>
                    <Cell rowSpan={2}><Rich lines={sheetText.r21} /></Cell>
                    <Cell rowSpan={2} />
                    <Cell rowSpan={2} $center><i>\</i></Cell>
                </tr>
                <tr><RowHead $h={21}>22</RowHead></tr>
                <tr>
                    <RowHead $h={52}>23</RowHead>
                    <Cell><Rich lines={sheetText.r23} /></Cell>
                    <Cell /><Cell />
                </tr>
                <tr>
                    <RowHead $h={62}>24</RowHead>
                    <Cell><Rich lines={sheetText.r24} /></Cell>
                    <Cell /><Cell />
                </tr>
                <tr>
                    <RowHead $h={146} $on>25</RowHead>
                    <Cell><Mixed text="4）铜皮上的开窗" /></Cell>
                    <Cell $current><Rich lines={sheetText.r25} /></Cell>
                    <Cell $center><Rich lines={sheetText.i25} /></Cell>
                    <Cell />
                </tr>
                <tr>
                    <RowHead $h={44}>26</RowHead>
                    <Cell><Mixed text="5）开窗距导体" /></Cell>
                    <Cell><Rich lines={sheetText.r26} /></Cell>
                    {slash}{slash}
                </tr>
                <tr>
                    <RowHead $h={40}>27</RowHead>
                    <Cell><Rich lines={[['6）阻焊边框制作要'], ['求']]} /></Cell>
                    <Cell><Rich lines={sheetText.r27} /></Cell>
                    <Cell /><Cell />
                </tr>
                <tr>
                    <RowHead $h={39} />
                    <Cell />
                    <Cell><Rich lines={sheetText.r28} /></Cell>
                    <Cell /><Cell />
                </tr>
            </tbody>
        </Sheet>
    )
}

function Spreadsheet() {
    return (
        <Excel>
            <ExcelTitle>
                <Quick>
                    <svg width="14" height="14" viewBox="0 0 14 14">
                        <path d="M0.500 0.500h13v13h-13z" fill="#4648b0" stroke="#2a2a80" /><path d="M3 1h8v6H3z" fill="#fff" /><path d="M4 9h6v5H4z" fill="#ccd" />
                    </svg>
                    <svg width="13" height="13" viewBox="0 0 13 13" fill="none" stroke="#2f5fc4" strokeWidth="2.500">
                        <path d="M1 2v5h5M2 6q8-6 9 0-1 4-5 6" />
                    </svg>
                    <Tri />
                    <svg width="13" height="13" viewBox="0 0 13 13" fill="none" stroke="#93b4cc" strokeWidth="2">
                        <path d="M12 2v5H7M11 6Q3 0 2 6q1 4 5 6" />
                    </svg>
                </Quick>
                <svg width="5" height="6" viewBox="0 0 5 6" fill="#223"><path d="M0 0h5v1H0zM0 3h5L2.500 6z" /></svg>
                <h1>{'P6 CAM制作规范2020-07-10.xls  [兼容模式] - Microsoft Excel'}</h1>
            </ExcelTitle>
            <TabBar>
                {ribbonTabs.map((tab, i) => <RibbonTab key={tab} $on={i === 0}>{tab}</RibbonTab>)}
            </TabBar>
            <OfficeButton aria-label="Office menu">
                <svg width="22" height="22" viewBox="0 0 22 22" fill="none" strokeWidth="3">
                    <rect x="2" y="2" width="8" height="8" rx="1" stroke="#d8441c" />
                    <rect x="13" y="5" width="6" height="6" rx="1" stroke="#3f8bd0" strokeWidth="2" />
                    <rect x="4" y="13" width="6" height="6" rx="1" stroke="#f0b224" strokeWidth="2" />
                    <rect x="13" y="13" width="7" height="7" rx="1" stroke="#5ca63a" />
                </svg>
            </OfficeButton>
            <RibbonGroups />
            <FormulaBar>
                <NameBox><span>D25</span><svg width="7" height="4" viewBox="0 0 7 4"><path d="M0 0h7L3.500 4z" /></svg></NameBox>
                <FxBox>fx</FxBox>
                <FormulaText>
                    <Mixed text="a、SMT和BGA焊盘完全设计在大铜面或者粗走线里面时，对应的阻焊开窗只需要比补偿前的线路" />
                </FormulaText>
            </FormulaBar>
            <ColHeads>
                {[['', 33], ['A', 31], ['B', 76], ['C', 126], ['D', 75, 1], ['E', 79, 1], ['F', 85, 1], ['G', 149, 1], ['I', 58], ['J', 59], ['K', 65]].map(([name, w, on]) => (
                    <ColHead key={name} $w={w} $on={on}>{name}</ColHead>
                ))}
            </ColHeads>
            <SheetView>
                <SheetTable />
                <Highlight />
            </SheetView>
            <SheetTabs>
                <svg width="52" height="10" viewBox="0 0 52 10" fill="#15428b">
                    <path d="M1 1h1v8H1zM7 1v8L3 5zM22 1v8l-4-4zM32 1v8l4-4zM46 1v8l4-4zM50 1h1v8h-1z" />
                </svg>
                {sheetTabs.map(tab => <SheetTab key={tab} $on={tab === '阻焊'}>{tab}</SheetTab>)}
            </SheetTabs>
            <ExcelStatus><span>就绪</span></ExcelStatus>
        </Excel>
    )
}

/* ---------- input method bars ---------- */

const LanguageBar = styled.div`
    position: absolute;
    right: 0;
    top: 853px;
    display: flex;
    align-items: center;
    gap: 9px;
    width: 79px;
    height: 26px;
    padding-left: 4px;
    border-top: 1px solid #999;
    background: linear-gradient(#6c6c6c, #4a4a4a 50%, #787878);
    color: #fff;
    font: 12px ${serif};
`

const Dots = styled.span`
    width: 9px;
    height: 17px;
    background: radial-gradient(circle, #bbb 1px, transparent 1px) 0 0 / 3px 3px;
`

const Help = styled.span`
    width: 15px;
    height: 15px;
    border: 1px solid #aac;
    border-radius: 50%;
    background: #1428a8;
    font: 700 12px/13px ${ui};
    text-align: center;
`

const SogouBar = styled.div`
    position: absolute;
    right: 2px;
    bottom: 0;
    display: flex;
    align-items: center;
    gap: 9px;
    height: 18px;
    padding: 2px 4px 0 0;
    border-top: 1px solid #9ab;
    background: #fff;
    color: #3d4660;
    font: 14px/16px ${han};
    overflow: hidden;
`

export default function App() {
    return (
        <Desktop>
            <Global />
            <GraphicEditor />
            <ResultsViewer />
            <ResultsHistogram />
            <Spreadsheet />
            <LanguageBar>
                <Dots />CH<Help>?</Help>
                <svg width="7" height="14" viewBox="0 0 7 14" fill="#fff"><path d="M1 1h5v2H1zM0 10h6l-3 3z" /></svg>
            </LanguageBar>
            <SogouBar>
                <svg width="26" height="18" viewBox="0 0 26 18">
                    <path d="M0 3L22 0l4 18H4z" fill="#2fae2c" />
                    <path d="M20 5Q7 3 8 8q1 3 7 3 5 0 4 5" fill="none" stroke="#fff" strokeWidth="3" />
                </svg>
                五
                <svg width="14" height="14"><circle cx="7" cy="7" r="6.500" fill="#3d4670" /></svg>
                <svg width="12" height="14" fill="none" stroke="#3d4670" strokeWidth="2">
                    <circle cx="3" cy="4" r="2" /><path d="M10 8q1 3-2 5" />
                </svg>
                <Keyboard size={16} />
                <User size={14} color="#b4cdc4" fill="#b4cdc4" />
                <Wrench size={14} fill="#3d4660" />
            </SogouBar>
        </Desktop>
    )
}
